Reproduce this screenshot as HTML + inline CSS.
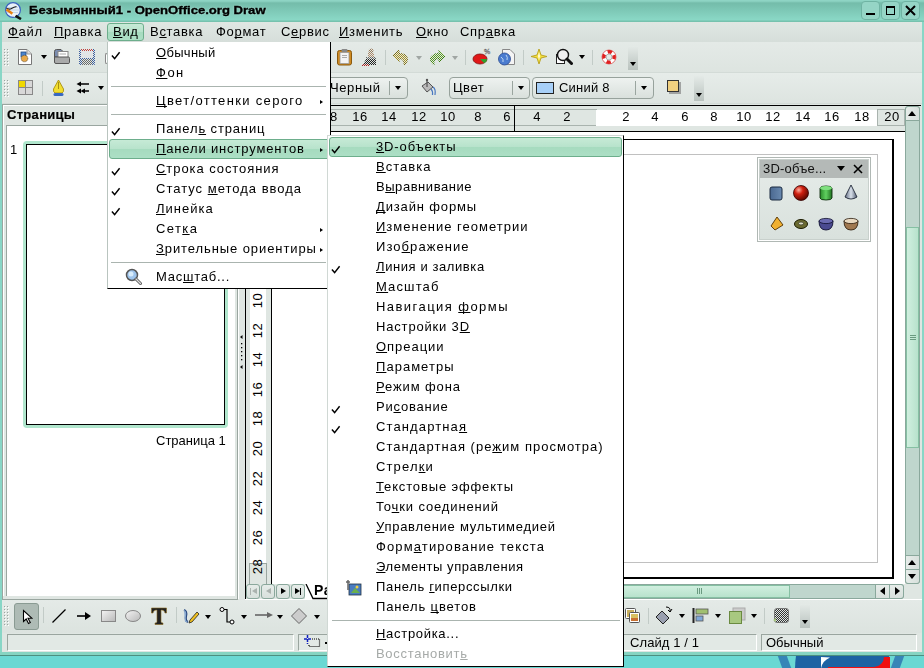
<!DOCTYPE html>
<html><head><meta charset="utf-8">
<style>
*{box-sizing:border-box}
html,body{margin:0;padding:0}
body{width:924px;height:668px;overflow:hidden;position:relative;background:#6ad8d3;font-family:"Liberation Sans",sans-serif;font-size:13px;color:#000}
.a{position:absolute}
.t{position:absolute;white-space:pre;line-height:15px;letter-spacing:0.7px;will-change:transform}
u{text-decoration:underline;text-decoration-thickness:1px;text-underline-offset:1px;text-decoration-skip-ink:none}
</style></head><body>

<!-- window frame -->
<div class="a" style="left:0;top:0;width:924px;height:655px;background:#88d6c6"></div>
<!-- title bar -->
<div class="a" style="left:0;top:0;width:924px;height:22px;background:linear-gradient(#8ed4c4 0px,#8ed4c4 1px,#74bcaa 3px,#8ad8c6 20px,#76c2ae 21px,#76c2ae 22px)"></div>
<!-- menubar -->
<div class="a" style="left:2px;top:22px;width:920px;height:20px;background:linear-gradient(#e0e7e3,#d6deda)"></div>
<!-- toolbar 1 -->
<div class="a" style="left:2px;top:42px;width:920px;height:31px;background:linear-gradient(#e4eae7,#dde4e0)"></div>
<!-- toolbar 2 -->
<div class="a" style="left:2px;top:73px;width:920px;height:31px;background:linear-gradient(#e6ece9,#dde4e0)"></div>

<!-- title icon -->
<svg class="a" style="left:4px;top:1px" width="19" height="19" viewBox="0 0 19 19">
<circle cx="9" cy="9" r="7.4" fill="#e8f0f8" stroke="#3a62c0" stroke-width="1.2"/>
<path d="M3 9H15M3 11.5H14M4 6.5H14" stroke="#c0d4ec" stroke-width="1"/>
<path d="M2.5 7 Q5 9 7.5 7.5 T12.5 5.5" stroke="#222" stroke-width="1.1" fill="none"/>
<path d="M2.5 8.5 L8.5 12.8" stroke="#e88010" stroke-width="2.6"/>
<path d="M8.5 12.8 L11.5 14.8" stroke="#f4f4f4" stroke-width="2.6"/>
<path d="M11.5 14.8 L17 18" stroke="#111" stroke-width="2.6"/>
</svg>
<div class="t" style="left:29px;top:3px;font-weight:bold;font-size:11px;letter-spacing:0;transform:scaleX(1.19);transform-origin:0 0;-webkit-text-stroke:0.35px #000;text-shadow:0 0 2px rgba(255,255,255,0.5)">Безымянный1 - OpenOffice.org Draw</div>
<!-- window buttons -->
<div class="a" style="left:861px;top:1px;width:19px;height:19px;border:1px solid #6fb3a3;border-radius:4px;background:#95d5c6"></div>
<div class="a" style="left:881px;top:1px;width:19px;height:19px;border:1px solid #6fb3a3;border-radius:4px;background:#95d5c6"></div>
<div class="a" style="left:901px;top:1px;width:19px;height:19px;border:1px solid #6fb3a3;border-radius:4px;background:#95d5c6"></div>
<div class="a" style="left:866px;top:13px;width:9px;height:2px;background:#000"></div>
<div class="a" style="left:886px;top:6px;width:9px;height:9px;border:1px solid #000;border-top-width:2px"></div>
<svg class="a" style="left:905px;top:5px" width="11" height="11" viewBox="0 0 11 11"><path d="M1 1L10 10M10 1L1 10" stroke="#000" stroke-width="2"/></svg>

<!-- menubar items -->
<div class="a" style="left:107px;top:23px;width:37px;height:18px;border:1px solid #6dae8c;border-radius:3px;background:linear-gradient(#c6ead6 0%,#b8e3cc 48%,#a6dbbf 52%,#acdfc5 100%)"></div>
<div class="t" style="left:8px;top:24px"><u>Ф</u>айл</div>
<div class="t" style="left:54px;top:24px"><u>П</u>равка</div>
<div class="t" style="left:113px;top:24px"><u>В</u>ид</div>
<div class="t" style="left:150px;top:24px">В<u>с</u>тавка</div>
<div class="t" style="left:216px;top:24px">Фо<u>р</u>мат</div>
<div class="t" style="left:281px;top:24px">С<u>е</u>рвис</div>
<div class="t" style="left:339px;top:24px"><u>И</u>зменить</div>
<div class="t" style="left:416px;top:24px"><u>О</u>кно</div>
<div class="t" style="left:460px;top:24px">Спр<u>а</u>вка</div>

<!-- main area bg -->
<div class="a" style="left:2px;top:104px;width:920px;height:496px;background:#dfe6e2"></div>

<!-- ===== left pane ===== -->
<div class="a" style="left:2px;top:104px;width:236px;height:496px;background:#dfe6e2;border-left:1px solid #9aa6a0"></div>
<div class="a" style="left:3px;top:104px;width:234px;height:1px;background:#9aa6a0"></div>
<div class="a" style="left:3px;top:105px;width:234px;height:1px;background:#fff"></div><div class="a" style="left:3px;top:105px;width:1px;height:492px;background:#fff"></div>
<div class="t" style="left:7px;top:107px;font-weight:bold;letter-spacing:0.3px;-webkit-text-stroke:0.2px #000">Страницы</div>
<div class="a" style="left:3px;top:125px;width:234px;height:474px;background:#fff"></div>
<div class="a" style="left:4px;top:125px;width:2px;height:472px;background:#e0e8e4"></div><div class="a" style="left:6px;top:125px;width:1px;height:472px;background:#9aa6a0"></div>
<div class="a" style="left:6px;top:125px;width:231px;height:1px;background:#9aa6a0"></div>
<div class="a" style="left:3px;top:596px;width:234px;height:3px;background:#dfe6e2"></div>
<div class="a" style="left:2px;top:599px;width:236px;height:1px;background:#9aa6a0"></div>
<div class="a" style="left:237px;top:104px;width:1px;height:496px;background:#9aa6a0"></div>
<div class="a" style="left:235px;top:125px;width:2px;height:472px;background:#dfe6e2"></div>
<div class="t" style="left:10px;top:142px">1</div>
<div class="a" style="left:23px;top:141px;width:205px;height:287px;border:3px solid #b0e6cd;border-radius:4px"></div>
<div class="a" style="left:26px;top:144px;width:199px;height:281px;border:1px solid #000"></div>
<div class="t" style="left:156px;top:433px;letter-spacing:0">Страница 1</div>
<!-- splitter -->
<div class="a" style="left:238px;top:104px;width:7px;height:496px;background:#dfe6e2"></div><div class="a" style="left:238px;top:104px;width:1px;height:495px;background:#fff"></div>
<svg class="a" style="left:239px;top:334px" width="5" height="36" viewBox="0 0 5 36"><path d="M1 3L3.5 1V5Z M1 33L3.5 31V35Z" fill="#000"/><rect x="2" y="9" width="1.3" height="1.3" fill="#000"/><rect x="2" y="13" width="1.3" height="1.3" fill="#000"/><rect x="2" y="17" width="1.3" height="1.3" fill="#000"/><rect x="2" y="21" width="1.3" height="1.3" fill="#000"/><rect x="2" y="25" width="1.3" height="1.3" fill="#000"/></svg>

<!-- ===== vertical ruler ===== -->
<div class="a" style="left:245px;top:105px;width:27px;height:480px;background:#dfe6e2;border-left:1px solid #000;border-right:1px solid #000"></div>
<div class="a" style="left:250px;top:132px;width:16px;height:431px;background:#fff"></div><div class="a" style="left:245px;top:584px;width:1px;height:15px;background:#000"></div>
<div class="a" style="left:249px;top:563px;width:18px;height:22px;border:1px solid #9aa6a0;border-bottom:none"></div>

<!-- ===== horizontal ruler ===== -->
<div class="a" style="left:245px;top:105px;width:661px;height:27px;background:#dfe6e2;border-top:1px solid #000;border-bottom:1px solid #000"></div><div class="a" style="left:906px;top:105px;width:15px;height:1px;background:#000"></div>
<div class="a" style="left:330px;top:109px;width:267px;height:17px;background:#dfe6e2;border:1px solid #a9b3ae;border-right:none"></div>
<div class="a" style="left:596px;top:110px;width:281px;height:16px;background:#fff"></div>
<div class="a" style="left:877px;top:109px;width:28px;height:17px;border:1px solid #a9b3ae;background:#dfe6e2"></div>
<div class="a" style="left:514px;top:105px;width:1px;height:26px;background:#000"></div>

<!-- ===== drawing area ===== -->
<div class="a" style="left:272px;top:132px;width:633px;height:452px;background:#fff"></div>
<div class="a" style="left:581px;top:139px;width:313px;height:440px;border:2px solid #000;border-width:1px 2px 2px 1px"></div>
<div class="a" style="left:596px;top:154px;width:282px;height:409px;border:1px solid #c0c0c0"></div>

<!-- vertical scrollbar -->
<div class="a" style="left:905px;top:106px;width:15px;height:478px;background:#bfd6cd;border:1px solid #8aa89c;border-radius:3px"></div>
<div class="a" style="left:905px;top:106px;width:15px;height:15px;background:linear-gradient(90deg,#e6ece9,#d8e0dc);border:1px solid #8aa89c;border-radius:3px 3px 0 0"></div>
<div class="a" style="left:906px;top:227px;width:13px;height:221px;background:linear-gradient(90deg,#d0efdf,#b8e2cc);border:1px solid #86c0a3"></div>
<div class="a" style="left:905px;top:555px;width:15px;height:15px;background:linear-gradient(90deg,#e6ece9,#d8e0dc);border:1px solid #8aa89c"></div>
<div class="a" style="left:905px;top:569px;width:15px;height:15px;background:linear-gradient(90deg,#e6ece9,#d8e0dc);border:1px solid #8aa89c;border-radius:0 0 3px 3px"></div>
<!-- horizontal scrollbar -->
<div class="a" style="left:420px;top:584px;width:484px;height:15px;background:#bfd6cd;border:1px solid #8aa89c;border-radius:3px"></div>
<div class="a" style="left:610px;top:585px;width:180px;height:13px;background:linear-gradient(#d0efdf,#b8e2cc);border:1px solid #86c0a3"></div>
<div class="a" style="left:875px;top:584px;width:15px;height:15px;background:linear-gradient(#e6ece9,#d8e0dc);border:1px solid #8aa89c"></div>
<div class="a" style="left:889px;top:584px;width:15px;height:15px;background:linear-gradient(#e6ece9,#d8e0dc);border:1px solid #8aa89c;border-radius:0 3px 3px 0"></div>
<div class="a" style="left:305px;top:584px;width:115px;height:15px;background:#fff"></div>
<!-- nav buttons + tab -->
<div class="a" style="left:246px;top:584px;width:14px;height:15px;background:linear-gradient(#e6ece9,#d8e0dc);border:1px solid #8aa89c;border-radius:3px"></div>
<div class="a" style="left:261px;top:584px;width:14px;height:15px;background:linear-gradient(#e6ece9,#d8e0dc);border:1px solid #8aa89c;border-radius:3px"></div>
<div class="a" style="left:276px;top:584px;width:14px;height:15px;background:linear-gradient(#e6ece9,#d8e0dc);border:1px solid #8aa89c;border-radius:3px"></div>
<div class="a" style="left:291px;top:584px;width:14px;height:15px;background:linear-gradient(#e6ece9,#d8e0dc);border:1px solid #8aa89c;border-radius:3px"></div>
<div class="a" style="left:245px;top:599px;width:677px;height:1px;background:#fff"></div>

<!-- bottom toolbar -->
<div class="a" style="left:2px;top:600px;width:920px;height:33px;background:linear-gradient(#e4eae7,#dce3df)"></div>
<!-- status bar -->
<div class="a" style="left:2px;top:633px;width:920px;height:21px;background:#dfe6e2"></div>

<div class="a" style="left:2px;top:72px;width:920px;height:1px;background:#d3dbd7"></div>
<div class="a" style="left:2px;top:103px;width:920px;height:1px;background:#d3dbd7"></div>
<svg class="a" style="left:4px;top:49px" width="6" height="18" viewBox="0 0 6 18"><rect x="0" y="0" width="1" height="1" fill="#9aa4a0"/><rect x="1" y="1" width="1" height="1" fill="#fff"/><rect x="3" y="0" width="1" height="1" fill="#9aa4a0"/><rect x="4" y="1" width="1" height="1" fill="#fff"/><rect x="0" y="3" width="1" height="1" fill="#9aa4a0"/><rect x="1" y="4" width="1" height="1" fill="#fff"/><rect x="3" y="3" width="1" height="1" fill="#9aa4a0"/><rect x="4" y="4" width="1" height="1" fill="#fff"/><rect x="0" y="6" width="1" height="1" fill="#9aa4a0"/><rect x="1" y="7" width="1" height="1" fill="#fff"/><rect x="3" y="6" width="1" height="1" fill="#9aa4a0"/><rect x="4" y="7" width="1" height="1" fill="#fff"/><rect x="0" y="9" width="1" height="1" fill="#9aa4a0"/><rect x="1" y="10" width="1" height="1" fill="#fff"/><rect x="3" y="9" width="1" height="1" fill="#9aa4a0"/><rect x="4" y="10" width="1" height="1" fill="#fff"/><rect x="0" y="12" width="1" height="1" fill="#9aa4a0"/><rect x="1" y="13" width="1" height="1" fill="#fff"/><rect x="3" y="12" width="1" height="1" fill="#9aa4a0"/><rect x="4" y="13" width="1" height="1" fill="#fff"/><rect x="0" y="15" width="1" height="1" fill="#9aa4a0"/><rect x="1" y="16" width="1" height="1" fill="#fff"/><rect x="3" y="15" width="1" height="1" fill="#9aa4a0"/><rect x="4" y="16" width="1" height="1" fill="#fff"/></svg>
<svg class="a" style="left:17px;top:48px;" width="16" height="18" viewBox="0 0 16 18"><path d="M1.5 1.5H10L14.5 6V16.5H1.5Z" fill="#fff" stroke="#777"/><path d="M10 1.5V6H14.5" fill="#ddd" stroke="#999"/><rect x="4" y="4" width="5" height="5" fill="#4a86d0" stroke="#234a80" stroke-width="0.8"/><circle cx="7.5" cy="10.5" r="3.3" fill="#e8a848" stroke="#333" stroke-width="0.8" stroke-dasharray="1 1"/></svg>
<div class="a" style="left:41px;top:55px;width:0;height:0;border-top:4px solid #000;border-left:3px solid transparent;border-right:3px solid transparent"></div>
<svg class="a" style="left:53px;top:48px;" width="18" height="17" viewBox="0 0 18 17"><path d="M1.5 3.5Q1.5 1.5 3.5 1.5H8L10 3.5V9H1.5Z" fill="#7a8db0" stroke="#555"/><rect x="5" y="3.5" width="10" height="7" fill="#fff" stroke="#888"/><path d="M6.5 6H13" stroke="#aaa"/><path d="M1.5 9H15.5Q16.5 9 16.5 10.5V14.5Q16.5 15.5 15 15.5H3Q1.5 15.5 1.5 14V9Z" fill="#a9aaaa" stroke="#555"/></svg>
<svg class="a" style="left:78px;top:48px;" width="18" height="18" viewBox="0 0 18 18"><defs><pattern id="dz" width="2" height="2" patternUnits="userSpaceOnUse"><rect width="1" height="1" fill="#fff"/><rect x="1" y="1" width="1" height="1" fill="#fff"/></pattern><mask id="dm"><rect width="18" height="18" fill="url(#dz)"/></mask></defs><g mask="url(#dm)"><rect x="1" y="1" width="16" height="16" rx="1" fill="#3f5f9f"/><rect x="3" y="1" width="12" height="2" fill="#c04040"/><rect x="3" y="3" width="12" height="7" fill="#e8e8e8"/><rect x="4" y="11" width="10" height="6" fill="#6a6a6a"/></g><rect x="3" y="3" width="12" height="7" fill="#dfe3e6" opacity="0.6"/></svg>
<div class="a" style="left:105px;top:53px;width:3px;height:11px;border:1px solid #888;border-right:none;border-radius:2px 0 0 2px;background:#fff"></div>
<svg class="a" style="left:336px;top:48px;" width="17" height="18" viewBox="0 0 17 18"><rect x="1.5" y="2.5" width="14" height="14.5" rx="2" fill="#d08a20" stroke="#8a5a10"/><rect x="4" y="4.5" width="9" height="11" fill="#f4f4f4" stroke="#999" stroke-width="0.8"/><rect x="5.5" y="1" width="6" height="3" rx="1" fill="#888"/><path d="M6 7.5H11M6 9.5H11" stroke="#aaa"/></svg>
<svg class="a" style="left:361px;top:48px;" width="17" height="18" viewBox="0 0 17 18"><defs><mask id="dm2"><rect width="18" height="18" fill="url(#dz)"/></mask></defs><g mask="url(#dm2)"><circle cx="10" cy="3" r="2.5" fill="#9a7a5a"/><rect x="7" y="5" width="6" height="5" fill="#b08a6a"/><rect x="5" y="9" width="10" height="3" fill="#666"/><path d="M2 17L5 11H15V17Z" fill="#222"/><path d="M1 17H8" stroke="#b02020" stroke-width="2"/></g></svg>
<div class="a" style="left:385px;top:50px;width:1px;height:15px;background:#c2cbc7"></div>
<svg class="a" style="left:392px;top:48px;" width="18" height="18" viewBox="0 0 18 18"><defs><mask id="dm3"><rect width="18" height="18" fill="url(#dz)"/></mask></defs><g mask="url(#dm3)"><path d="M1 8L7 2V5.5Q15 5.5 15.5 11Q15.5 15 12 17Q13 11 7 10.5V14Z" fill="#a89020" stroke="#7a6a10"/></g></svg>
<div class="a" style="left:416px;top:56px;width:0;height:0;border-top:4px solid #a0a6a3;border-left:3px solid transparent;border-right:3px solid transparent"></div>
<svg class="a" style="left:428px;top:48px;" width="18" height="18" viewBox="0 0 18 18"><defs><mask id="dm4"><rect width="18" height="18" fill="url(#dz)"/></mask></defs><g mask="url(#dm4)"><path d="M17 8L11 2V5.5Q3 5.5 2.5 11Q2.5 15 6 17Q5 11 11 10.5V14Z" fill="#5a9a20" stroke="#3a7a10"/></g></svg>
<div class="a" style="left:452px;top:56px;width:0;height:0;border-top:4px solid #a0a6a3;border-left:3px solid transparent;border-right:3px solid transparent"></div>
<div class="a" style="left:465px;top:50px;width:1px;height:15px;background:#c2cbc7"></div>
<svg class="a" style="left:472px;top:48px;" width="19" height="17" viewBox="0 0 19 17"><ellipse cx="8" cy="11" rx="7" ry="5" fill="#e01818" stroke="#801010" stroke-width="0.8"/><path d="M8 11L15 11Q15 14 12 15Z" fill="#30a030"/><text x="12" y="6" font-family="Liberation Sans" font-size="7" font-weight="bold" fill="#fff" stroke="#555" stroke-width="0.4">%</text></svg>
<svg class="a" style="left:497px;top:48px;" width="19" height="18" viewBox="0 0 19 18"><path d="M5.5 1.5H13L17.5 6V16.5H5.5Z" fill="#f4f4f4" stroke="#888"/><circle cx="7.5" cy="11" r="6" fill="#4a7cd0" stroke="#2a4a90" stroke-width="0.8"/><path d="M4 9Q7 11 6 14M9 7Q11 9 10 12" stroke="#c0d8f0" stroke-width="1" fill="none"/></svg>
<div class="a" style="left:523px;top:50px;width:1px;height:15px;background:#c2cbc7"></div>
<svg class="a" style="left:530px;top:48px;" width="18" height="17" viewBox="0 0 18 17"><path d="M9 1L11 7L17 8.5L11 10L9 16L7 10L1 8.5L7 7Z" fill="#f4e040" stroke="#b8a020" stroke-width="0.9"/><path d="M9 4L10 8L9 12L8 8Z" fill="#fffbe0"/></svg>
<svg class="a" style="left:555px;top:48px;" width="18" height="18" viewBox="0 0 18 18"><rect x="1.5" y="6.5" width="8" height="9" fill="#fff" stroke="#222"/><circle cx="8" cy="7" r="5.5" fill="#f0f0f0" stroke="#111" stroke-width="1.4"/><path d="M12 11L16.5 15.5" stroke="#111" stroke-width="3" stroke-linecap="round"/></svg>
<div class="a" style="left:579px;top:55px;width:0;height:0;border-top:4px solid #000;border-left:3px solid transparent;border-right:3px solid transparent"></div>
<div class="a" style="left:592px;top:50px;width:1px;height:15px;background:#c2cbc7"></div>
<svg class="a" style="left:600px;top:48px;" width="18" height="18" viewBox="0 0 18 18"><circle cx="9" cy="9" r="7" fill="#fff" stroke="#d02020" stroke-width="0.6"/><circle cx="9" cy="9" r="5.2" fill="none" stroke="#e02020" stroke-width="3.5" stroke-dasharray="4.1 4.1" transform="rotate(-22 9 9)"/><circle cx="9" cy="9" r="3" fill="#e4eae7" stroke="#888" stroke-width="0.6"/></svg>
<div class="a" style="left:628px;top:46px;width:10px;height:24px;background:linear-gradient(#e4eae7,#b9c2be)"></div>
<div class="a" style="left:630px;top:62px;width:0;height:0;border-top:4px solid #000;border-left:3px solid transparent;border-right:3px solid transparent"></div>
<svg class="a" style="left:4px;top:80px" width="6" height="18" viewBox="0 0 6 18"><rect x="0" y="0" width="1" height="1" fill="#9aa4a0"/><rect x="1" y="1" width="1" height="1" fill="#fff"/><rect x="3" y="0" width="1" height="1" fill="#9aa4a0"/><rect x="4" y="1" width="1" height="1" fill="#fff"/><rect x="0" y="3" width="1" height="1" fill="#9aa4a0"/><rect x="1" y="4" width="1" height="1" fill="#fff"/><rect x="3" y="3" width="1" height="1" fill="#9aa4a0"/><rect x="4" y="4" width="1" height="1" fill="#fff"/><rect x="0" y="6" width="1" height="1" fill="#9aa4a0"/><rect x="1" y="7" width="1" height="1" fill="#fff"/><rect x="3" y="6" width="1" height="1" fill="#9aa4a0"/><rect x="4" y="7" width="1" height="1" fill="#fff"/><rect x="0" y="9" width="1" height="1" fill="#9aa4a0"/><rect x="1" y="10" width="1" height="1" fill="#fff"/><rect x="3" y="9" width="1" height="1" fill="#9aa4a0"/><rect x="4" y="10" width="1" height="1" fill="#fff"/><rect x="0" y="12" width="1" height="1" fill="#9aa4a0"/><rect x="1" y="13" width="1" height="1" fill="#fff"/><rect x="3" y="12" width="1" height="1" fill="#9aa4a0"/><rect x="4" y="13" width="1" height="1" fill="#fff"/><rect x="0" y="15" width="1" height="1" fill="#9aa4a0"/><rect x="1" y="16" width="1" height="1" fill="#fff"/><rect x="3" y="15" width="1" height="1" fill="#9aa4a0"/><rect x="4" y="16" width="1" height="1" fill="#fff"/></svg>
<svg class="a" style="left:17px;top:79px;" width="17" height="17" viewBox="0 0 17 17"><rect x="1.5" y="1.5" width="14" height="14" fill="#d8d8d8" stroke="#888"/><rect x="2" y="2" width="6.5" height="6.5" fill="#f0d800"/><path d="M8.5 1.5V15.5M1.5 8.5H15.5" stroke="#888"/></svg>
<div class="a" style="left:42px;top:81px;width:1px;height:15px;background:#c2cbc7"></div>
<svg class="a" style="left:52px;top:79px;" width="13" height="18" viewBox="0 0 13 18"><path d="M6.5 1L11.5 10Q12 13 10 14H3Q1 13 1.5 10Z" fill="#f2de30" stroke="#a89010" stroke-width="0.9"/><path d="M6.5 3V10" stroke="#a89010"/><rect x="1.5" y="14" width="10" height="3" rx="1.5" fill="#3a68c0"/></svg>
<svg class="a" style="left:76px;top:81px;" width="14" height="13" viewBox="0 0 14 13"><path d="M3 3H13" stroke="#000" stroke-width="1.5"/><path d="M0.5 3L5 0.5V5.5Z" fill="#000"/><path d="M7 10H13" stroke="#000" stroke-width="1.5"/><path d="M0.5 10L5 7.5V12.5Z M4.5 10L9 7.5V12.5Z" fill="#000"/></svg>
<div class="a" style="left:98px;top:86px;width:0;height:0;border-top:4px solid #000;border-left:3px solid transparent;border-right:3px solid transparent"></div>
<div class="a" style="left:300px;top:77px;width:108px;height:22px;border:1px solid #97a29c;border-radius:4px;background:linear-gradient(#eef2f0,#d9e0dc)"></div>
<div class="t" style="left:330px;top:80px;letter-spacing:0.6px">Черный</div>
<div class="a" style="left:389px;top:81px;width:1px;height:14px;background:#9aa59f"></div>
<div class="a" style="left:395px;top:86px;width:0;height:0;border-top:4px solid #000;border-left:3px solid transparent;border-right:3px solid transparent"></div>
<svg class="a" style="left:419px;top:78px;" width="18" height="18" viewBox="0 0 18 18"><path d="M3 8L9 4L14 9L8 14Z" fill="#bbb" stroke="#444" stroke-width="0.9"/><path d="M8 1V9" stroke="#555" stroke-width="1.2"/><circle cx="8" cy="2" r="1.2" fill="#555"/><path d="M14 9Q17 11 16 17M12 11Q14 13 13.5 17" stroke="#4a78c0" stroke-width="1.2" fill="none"/></svg>
<div class="a" style="left:449px;top:77px;width:81px;height:22px;border:1px solid #97a29c;border-radius:4px;background:linear-gradient(#eef2f0,#d9e0dc)"></div>
<div class="t" style="left:453px;top:80px;letter-spacing:0.5px">Цвет</div>
<div class="a" style="left:512px;top:81px;width:1px;height:14px;background:#9aa59f"></div>
<div class="a" style="left:518px;top:86px;width:0;height:0;border-top:4px solid #000;border-left:3px solid transparent;border-right:3px solid transparent"></div>
<div class="a" style="left:532px;top:77px;width:122px;height:22px;border:1px solid #97a29c;border-radius:4px;background:linear-gradient(#eef2f0,#d9e0dc)"></div>
<div class="a" style="left:536px;top:82px;width:18px;height:12px;border:1px solid #222;background:#a8d0f8"></div>
<div class="t" style="left:559px;top:80px;letter-spacing:0.2px">Синий 8</div>
<div class="a" style="left:635px;top:81px;width:1px;height:14px;background:#9aa59f"></div>
<div class="a" style="left:641px;top:86px;width:0;height:0;border-top:4px solid #000;border-left:3px solid transparent;border-right:3px solid transparent"></div>
<svg class="a" style="left:666px;top:79px;" width="17" height="16" viewBox="0 0 17 16"><rect x="3" y="3" width="12" height="12" fill="#777" opacity="0.6"/><rect x="1.5" y="1.5" width="11" height="11" fill="#f0d080" stroke="#333"/></svg>
<div class="a" style="left:694px;top:76px;width:10px;height:25px;background:linear-gradient(#e4eae7,#b9c2be)"></div>
<div class="a" style="left:696px;top:93px;width:0;height:0;border-top:4px solid #000;border-left:3px solid transparent;border-right:3px solid transparent"></div>
<svg class="a" style="left:4px;top:606px" width="6" height="21" viewBox="0 0 6 21"><rect x="0" y="0" width="1" height="1" fill="#9aa4a0"/><rect x="1" y="1" width="1" height="1" fill="#fff"/><rect x="3" y="0" width="1" height="1" fill="#9aa4a0"/><rect x="4" y="1" width="1" height="1" fill="#fff"/><rect x="0" y="3" width="1" height="1" fill="#9aa4a0"/><rect x="1" y="4" width="1" height="1" fill="#fff"/><rect x="3" y="3" width="1" height="1" fill="#9aa4a0"/><rect x="4" y="4" width="1" height="1" fill="#fff"/><rect x="0" y="6" width="1" height="1" fill="#9aa4a0"/><rect x="1" y="7" width="1" height="1" fill="#fff"/><rect x="3" y="6" width="1" height="1" fill="#9aa4a0"/><rect x="4" y="7" width="1" height="1" fill="#fff"/><rect x="0" y="9" width="1" height="1" fill="#9aa4a0"/><rect x="1" y="10" width="1" height="1" fill="#fff"/><rect x="3" y="9" width="1" height="1" fill="#9aa4a0"/><rect x="4" y="10" width="1" height="1" fill="#fff"/><rect x="0" y="12" width="1" height="1" fill="#9aa4a0"/><rect x="1" y="13" width="1" height="1" fill="#fff"/><rect x="3" y="12" width="1" height="1" fill="#9aa4a0"/><rect x="4" y="13" width="1" height="1" fill="#fff"/><rect x="0" y="15" width="1" height="1" fill="#9aa4a0"/><rect x="1" y="16" width="1" height="1" fill="#fff"/><rect x="3" y="15" width="1" height="1" fill="#9aa4a0"/><rect x="4" y="16" width="1" height="1" fill="#fff"/><rect x="0" y="18" width="1" height="1" fill="#9aa4a0"/><rect x="1" y="19" width="1" height="1" fill="#fff"/><rect x="3" y="18" width="1" height="1" fill="#9aa4a0"/><rect x="4" y="19" width="1" height="1" fill="#fff"/></svg>
<div class="a" style="left:14px;top:603px;width:25px;height:27px;border:1px solid #8a9b93;border-radius:3px;background:#aebbb5"></div>
<svg class="a" style="left:22px;top:609px;" width="11" height="16" viewBox="0 0 11 16"><path d="M1.5 1.5V12.5L4.2 10L6.5 14.5L8.3 13.6L6 9.2H9.8Z" fill="#fff" stroke="#000" stroke-width="1.1"/></svg>
<div class="a" style="left:43px;top:607px;width:1px;height:16px;background:#c2cbc7"></div>
<svg class="a" style="left:51px;top:608px;" width="16" height="16" viewBox="0 0 16 16"><path d="M1.5 14.5L14.5 1.5" stroke="#000" stroke-width="1.2"/></svg>
<svg class="a" style="left:76px;top:610px;" width="16" height="12" viewBox="0 0 16 12"><path d="M1 6H11" stroke="#000" stroke-width="1.6"/><path d="M9 2L15 6L9 10Z" fill="#000"/></svg>
<svg class="a" style="left:100px;top:609px;" width="17" height="14" viewBox="0 0 17 14"><defs><linearGradient id="rg" x1="0" y1="0" x2="1" y2="1"><stop offset="0" stop-color="#f4f4f4"/><stop offset="1" stop-color="#b8b8b8"/></linearGradient></defs><rect x="1.5" y="1.5" width="14" height="11" fill="url(#rg)" stroke="#888"/></svg>
<svg class="a" style="left:124px;top:609px;" width="18" height="14" viewBox="0 0 18 14"><ellipse cx="9" cy="7" rx="7.5" ry="5.5" fill="url(#rg)" stroke="#888"/></svg>
<svg class="a" style="left:150px;top:606px;" width="18" height="20" viewBox="0 0 18 20"><path d="M1.5 2H16.5V7H15Q14.5 4 12 4H11V16Q11 17 13 17V18.5H5V17Q7 17 7 16V4H6Q3.5 4 3 7H1.5Z" fill="#222" stroke="#8a6a20" stroke-width="0.6"/></svg>
<div class="a" style="left:176px;top:607px;width:1px;height:16px;background:#c2cbc7"></div>
<svg class="a" style="left:182px;top:608px;" width="18" height="16" viewBox="0 0 18 16"><path d="M2 2Q5 3 4 8Q3 13 6 14" stroke="#2a4a80" stroke-width="2.2" fill="none"/><path d="M2 2Q5 3 4 8Q3 13 6 14L3 14Z" fill="#8aaad0"/><path d="M8 12L15 4L17 6L10 14L7 15Z" fill="#f0c020" stroke="#222" stroke-width="0.8"/></svg>
<div class="a" style="left:205px;top:615px;width:0;height:0;border-top:4px solid #000;border-left:3px solid transparent;border-right:3px solid transparent"></div>
<svg class="a" style="left:219px;top:606px;" width="16" height="20" viewBox="0 0 16 20"><circle cx="3" cy="3.5" r="2" fill="#fff" stroke="#000"/><circle cx="13" cy="16" r="2" fill="#fff" stroke="#000"/><path d="M5 3.5H8V16H11" stroke="#000" stroke-width="1.2" fill="none"/></svg>
<div class="a" style="left:241px;top:615px;width:0;height:0;border-top:4px solid #000;border-left:3px solid transparent;border-right:3px solid transparent"></div>
<svg class="a" style="left:254px;top:610px;" width="20" height="10" viewBox="0 0 20 10"><path d="M1 5H15" stroke="#666" stroke-width="1.6"/><path d="M13 2L19 5L13 8Z" fill="#666"/></svg>
<div class="a" style="left:277px;top:615px;width:0;height:0;border-top:4px solid #000;border-left:3px solid transparent;border-right:3px solid transparent"></div>
<svg class="a" style="left:290px;top:607px;" width="18" height="18" viewBox="0 0 18 18"><path d="M9 1.5L16.5 9L9 16.5L1.5 9Z" fill="#ccc" stroke="#666"/></svg>
<div class="a" style="left:314px;top:615px;width:0;height:0;border-top:4px solid #000;border-left:3px solid transparent;border-right:3px solid transparent"></div>
<svg class="a" style="left:624px;top:607px;" width="17" height="17" viewBox="0 0 17 17"><rect x="1.5" y="1.5" width="10" height="10" rx="1" fill="#fff" stroke="#555"/><rect x="3" y="3" width="7" height="7" fill="#c8b060"/><rect x="5.5" y="5.5" width="10" height="10" rx="1" fill="#fff" stroke="#555"/><rect x="7" y="7" width="7" height="7" fill="#c87030"/><rect x="7" y="7" width="7" height="4" fill="#d8c060"/></svg>
<div class="a" style="left:648px;top:608px;width:1px;height:16px;background:#c2cbc7"></div>
<svg class="a" style="left:655px;top:606px;" width="18" height="19" viewBox="0 0 18 19"><path d="M7 5L14 12L8 18L1 11Z" fill="#9aa0b0" stroke="#222" stroke-width="1"/><path d="M11 1Q16 1 15 6M13 4L15 6L17 3" stroke="#000" stroke-width="1" fill="none"/></svg>
<div class="a" style="left:679px;top:614px;width:0;height:0;border-top:4px solid #000;border-left:3px solid transparent;border-right:3px solid transparent"></div>
<svg class="a" style="left:692px;top:607px;" width="17" height="17" viewBox="0 0 17 17"><path d="M1.5 1V16" stroke="#222" stroke-width="2"/><rect x="4" y="2" width="12" height="5" fill="#a0c070" stroke="#555" stroke-width="0.8"/><rect x="4" y="9" width="7" height="5" fill="#80a8d8" stroke="#555" stroke-width="0.8"/></svg>
<div class="a" style="left:715px;top:614px;width:0;height:0;border-top:4px solid #000;border-left:3px solid transparent;border-right:3px solid transparent"></div>
<svg class="a" style="left:728px;top:607px;" width="18" height="18" viewBox="0 0 18 18"><rect x="5" y="1" width="12" height="12" fill="#ccc" stroke="#aaa"/><rect x="1.5" y="4.5" width="12" height="12" fill="#a8c880" stroke="#6a8a40"/></svg>
<div class="a" style="left:751px;top:614px;width:0;height:0;border-top:4px solid #000;border-left:3px solid transparent;border-right:3px solid transparent"></div>
<div class="a" style="left:764px;top:608px;width:1px;height:16px;background:#c2cbc7"></div>
<svg class="a" style="left:772px;top:607px;" width="18" height="18" viewBox="0 0 18 18"><defs><pattern id="dz2" width="2" height="2" patternUnits="userSpaceOnUse"><rect width="1" height="1" fill="#333"/><rect x="1" y="1" width="1" height="1" fill="#333"/></pattern></defs><path d="M5 1.5H14Q16.5 1.5 16.5 4V13Q16.5 15.5 14 15.5H5Q2.5 15.5 2.5 13V4Q2.5 1.5 5 1.5Z" fill="url(#dz2)" stroke="#666" stroke-width="0.8"/><path d="M1 13L4 11V15Z" fill="#a8c880"/></svg>
<div class="a" style="left:800px;top:604px;width:10px;height:24px;background:linear-gradient(#e4eae7,#b9c2be)"></div>
<div class="a" style="left:802px;top:620px;width:0;height:0;border-top:4px solid #000;border-left:3px solid transparent;border-right:3px solid transparent"></div>
<!-- floating 3D toolbar -->
<div class="a" style="left:757px;top:157px;width:114px;height:85px;border:1px solid #b0b8b4;background:#fff"></div>
<div class="a" style="left:759px;top:159px;width:110px;height:81px;border:1px solid #c8d0cc;background:linear-gradient(#e6ece9,#d9e1dd)"></div>
<div class="a" style="left:760px;top:160px;width:108px;height:18px;background:#b4b9b7"></div>
<div class="t" style="left:763px;top:161px;letter-spacing:0.2px;color:#111">3D-объе...</div>
<div class="a" style="left:837px;top:166px;width:0;height:0;border-top:5px solid #000;border-left:4px solid transparent;border-right:4px solid transparent"></div>
<svg class="a" style="left:853px;top:164px" width="10" height="10" viewBox="0 0 10 10"><path d="M1 1L9 9M9 1L1 9" stroke="#000" stroke-width="1.6"/></svg>
<svg class="a" style="left:767px;top:184px" width="100" height="50" viewBox="0 0 100 50">
 <defs>
  <radialGradient id="gr" cx="0.35" cy="0.3" r="0.7"><stop offset="0" stop-color="#ffb0a0"/><stop offset="0.4" stop-color="#d02010"/><stop offset="1" stop-color="#600800"/></radialGradient>
  <linearGradient id="gg" x1="0" x2="1"><stop offset="0" stop-color="#2a8a2a"/><stop offset="0.5" stop-color="#60d060"/><stop offset="1" stop-color="#207020"/></linearGradient>
  <linearGradient id="gc" x1="0" x2="1"><stop offset="0" stop-color="#606a80"/><stop offset="0.5" stop-color="#d8e0ea"/><stop offset="1" stop-color="#505a70"/></linearGradient>
  <linearGradient id="gb" x1="0" x2="1"><stop offset="0" stop-color="#4a6890"/><stop offset="1" stop-color="#6a8ab0"/></linearGradient>
 </defs>
 <rect x="3" y="3" width="12" height="13" rx="2" fill="url(#gb)" stroke="#1a2a40" stroke-width="1"/>
 <circle cx="34" cy="9" r="7.5" fill="url(#gr)" stroke="#300" stroke-width="0.8"/>
 <path d="M53 4Q53 2 59 2Q65 2 65 4V14Q65 16 59 16Q53 16 53 14Z" fill="url(#gg)" stroke="#103010" stroke-width="0.9"/>
 <ellipse cx="59" cy="4" rx="6" ry="2" fill="#80e080"/>
 <path d="M84 1L90 13Q84 17 78 13Z" fill="url(#gc)" stroke="#202838" stroke-width="0.9"/>
<g transform="translate(0,6)"> <path d="M4 36L10 27L16 35L8 40Z" fill="#f0b030" stroke="#503000" stroke-width="0.9"/></g>
<g transform="translate(0,6)"> <ellipse cx="34" cy="34" rx="6.5" ry="4.5" fill="#6a6a30" stroke="#1a1a00" stroke-width="1"/></g>
<g transform="translate(0,6)"> <ellipse cx="34" cy="33.5" rx="2.5" ry="1.4" fill="#e0e0c0" stroke="#222" stroke-width="0.6"/></g>
<g transform="translate(0,6)"> <path d="M52 31Q52 40 59 40Q66 40 66 31Z" fill="#4a4a90" stroke="#101030" stroke-width="0.9"/></g>
<g transform="translate(0,6)"> <ellipse cx="59" cy="31" rx="7" ry="2.6" fill="#6a6ab0" stroke="#101030" stroke-width="0.8"/></g>
<g transform="translate(0,6)"> <path d="M77 31Q77 40 84 40Q91 40 91 31Z" fill="#a07850" stroke="#302010" stroke-width="0.9"/></g>
<g transform="translate(0,6)"> <ellipse cx="84" cy="31" rx="7" ry="2.6" fill="#e8d8c0" stroke="#302010" stroke-width="0.8"/></g>
</svg>
<!-- nav arrows -->
<div class="a" style="left:250px;top:588px;width:1px;height:7px;background:#aab2ae"></div>
<div class="a" style="left:252px;top:588px;width:0;height:0;border-right:5px solid #aab2ae;border-top:3.5px solid transparent;border-bottom:3.5px solid transparent"></div>
<div class="a" style="left:266px;top:588px;width:0;height:0;border-right:5px solid #aab2ae;border-top:3.5px solid transparent;border-bottom:3.5px solid transparent"></div>
<div class="a" style="left:281px;top:588px;width:0;height:0;border-left:5px solid #000;border-top:3.5px solid transparent;border-bottom:3.5px solid transparent"></div>
<div class="a" style="left:295px;top:588px;width:0;height:0;border-left:5px solid #000;border-top:3.5px solid transparent;border-bottom:3.5px solid transparent"></div>
<div class="a" style="left:300px;top:588px;width:1px;height:7px;background:#000"></div>
<svg class="a" style="left:305px;top:584px" width="30" height="16" viewBox="0 0 30 16"><path d="M1 0L8 14.5H30" stroke="#000" stroke-width="1.3" fill="none"/></svg>
<div class="t" style="left:314px;top:583px;font-weight:bold;font-size:14px;letter-spacing:0.5px">Pa</div>
<!-- scrollbar arrows -->
<div class="a" style="left:908px;top:111px;width:0;height:0;border-bottom:5px solid #000;border-left:4.5px solid transparent;border-right:4.5px solid transparent"></div>
<div class="a" style="left:908px;top:560px;width:0;height:0;border-bottom:5px solid #000;border-left:4.5px solid transparent;border-right:4.5px solid transparent"></div>
<div class="a" style="left:908px;top:574px;width:0;height:0;border-top:5px solid #000;border-left:4.5px solid transparent;border-right:4.5px solid transparent"></div>
<div class="a" style="left:880px;top:587px;width:0;height:0;border-right:5px solid #000;border-top:4.5px solid transparent;border-bottom:4.5px solid transparent"></div>
<div class="a" style="left:895px;top:587px;width:0;height:0;border-left:5px solid #000;border-top:4.5px solid transparent;border-bottom:4.5px solid transparent"></div>
<div class="a" style="left:697px;top:588px;width:5px;height:6px;border-left:1px solid #6a9a80;border-right:1px solid #6a9a80"></div>
<div class="a" style="left:699px;top:588px;width:1px;height:6px;background:#6a9a80"></div>
<div class="a" style="left:910px;top:335px;width:6px;height:5px;border-top:1px solid #6a9a80;border-bottom:1px solid #6a9a80"></div>
<div class="a" style="left:910px;top:337px;width:6px;height:1px;background:#6a9a80"></div>

<div class="t" style="left:551.5px;top:109px;width:30px;text-align:center;letter-spacing:0.4px">2</div>
<div class="t" style="left:521.9px;top:109px;width:30px;text-align:center;letter-spacing:0.4px">4</div>
<div class="t" style="left:492.4px;top:109px;width:30px;text-align:center;letter-spacing:0.4px">6</div>
<div class="t" style="left:462.8px;top:109px;width:30px;text-align:center;letter-spacing:0.4px">8</div>
<div class="t" style="left:433.2px;top:109px;width:30px;text-align:center;letter-spacing:0.4px">10</div>
<div class="t" style="left:403.7px;top:109px;width:30px;text-align:center;letter-spacing:0.4px">12</div>
<div class="t" style="left:374.1px;top:109px;width:30px;text-align:center;letter-spacing:0.4px">14</div>
<div class="t" style="left:344.6px;top:109px;width:30px;text-align:center;letter-spacing:0.4px">16</div>
<div class="t" style="left:315.1px;top:109px;width:30px;text-align:center;letter-spacing:0.4px">18</div>
<div class="t" style="left:610.5px;top:109px;width:30px;text-align:center;letter-spacing:0.4px">2</div>
<div class="t" style="left:640.1px;top:109px;width:30px;text-align:center;letter-spacing:0.4px">4</div>
<div class="t" style="left:669.6px;top:109px;width:30px;text-align:center;letter-spacing:0.4px">6</div>
<div class="t" style="left:699.2px;top:109px;width:30px;text-align:center;letter-spacing:0.4px">8</div>
<div class="t" style="left:728.8px;top:109px;width:30px;text-align:center;letter-spacing:0.4px">10</div>
<div class="t" style="left:758.3px;top:109px;width:30px;text-align:center;letter-spacing:0.4px">12</div>
<div class="t" style="left:787.9px;top:109px;width:30px;text-align:center;letter-spacing:0.4px">14</div>
<div class="t" style="left:817.4px;top:109px;width:30px;text-align:center;letter-spacing:0.4px">16</div>
<div class="t" style="left:847.0px;top:109px;width:30px;text-align:center;letter-spacing:0.4px">18</div>
<div class="t" style="left:876.5px;top:109px;width:30px;text-align:center;letter-spacing:0.4px">20</div>
<div class="t" style="left:242px;top:175.1px;width:30px;text-align:center;letter-spacing:0.4px;will-change:auto;transform:rotate(-90deg)">2</div>
<div class="t" style="left:242px;top:204.6px;width:30px;text-align:center;letter-spacing:0.4px;will-change:auto;transform:rotate(-90deg)">4</div>
<div class="t" style="left:242px;top:234.2px;width:30px;text-align:center;letter-spacing:0.4px;will-change:auto;transform:rotate(-90deg)">6</div>
<div class="t" style="left:242px;top:263.7px;width:30px;text-align:center;letter-spacing:0.4px;will-change:auto;transform:rotate(-90deg)">8</div>
<div class="t" style="left:242px;top:293.2px;width:30px;text-align:center;letter-spacing:0.4px;will-change:auto;transform:rotate(-90deg)">10</div>
<div class="t" style="left:242px;top:322.8px;width:30px;text-align:center;letter-spacing:0.4px;will-change:auto;transform:rotate(-90deg)">12</div>
<div class="t" style="left:242px;top:352.4px;width:30px;text-align:center;letter-spacing:0.4px;will-change:auto;transform:rotate(-90deg)">14</div>
<div class="t" style="left:242px;top:381.9px;width:30px;text-align:center;letter-spacing:0.4px;will-change:auto;transform:rotate(-90deg)">16</div>
<div class="t" style="left:242px;top:411.4px;width:30px;text-align:center;letter-spacing:0.4px;will-change:auto;transform:rotate(-90deg)">18</div>
<div class="t" style="left:242px;top:441.0px;width:30px;text-align:center;letter-spacing:0.4px;will-change:auto;transform:rotate(-90deg)">20</div>
<div class="t" style="left:242px;top:470.6px;width:30px;text-align:center;letter-spacing:0.4px;will-change:auto;transform:rotate(-90deg)">22</div>
<div class="t" style="left:242px;top:500.1px;width:30px;text-align:center;letter-spacing:0.4px;will-change:auto;transform:rotate(-90deg)">24</div>
<div class="t" style="left:242px;top:529.7px;width:30px;text-align:center;letter-spacing:0.4px;will-change:auto;transform:rotate(-90deg)">26</div>
<div class="t" style="left:242px;top:559.2px;width:30px;text-align:center;letter-spacing:0.4px;will-change:auto;transform:rotate(-90deg)">28</div>
<!-- status bar cells -->
<div class="a" style="left:7px;top:634px;width:287px;height:17px;border:1px solid;border-color:#9aa59f #fff #fff #9aa59f;background:#e2e9e5"></div>
<div class="a" style="left:298px;top:634px;width:326px;height:17px;border:1px solid;border-color:#9aa59f #fff #fff #9aa59f;background:#e2e9e5"></div>
<svg class="a" style="left:304px;top:635px" width="17" height="13" viewBox="0 0 17 13"><path d="M3.5 0V9M0 4H7" stroke="#1020c0" stroke-width="1.5" stroke-dasharray="3 1"/><path d="M8 4H15.5V11.5H5V9" stroke="#000" stroke-width="1.2" stroke-dasharray="1 1" fill="none"/></svg>
<div class="a" style="left:325px;top:642px;width:2px;height:2px;background:#000"></div>
<div class="a" style="left:600px;top:634px;width:157px;height:17px;border:1px solid;border-color:#9aa59f #fff #fff #9aa59f;background:#e2e9e5"></div>
<div class="t" style="left:630px;top:635px;letter-spacing:0.1px">Слайд 1 / 1</div>
<div class="a" style="left:761px;top:634px;width:156px;height:17px;border:1px solid;border-color:#9aa59f #fff #fff #9aa59f;background:#e2e9e5"></div>
<div class="t" style="left:766px;top:635px;letter-spacing:0">Обычный</div>
<!-- window bottom edge -->
<div class="a" style="left:0;top:652px;width:924px;height:3px;background:#86d4c2"></div>
<div class="a" style="left:0;top:655px;width:924px;height:1px;background:#4d8f80"></div>
<!-- desktop logo -->
<div class="a" style="left:0;top:656px;width:924px;height:12px;overflow:hidden">
 <div class="a" style="left:780px;top:-1px;width:9px;height:14px;background:#2a70b0;transform:skewX(20deg);opacity:0.8"></div>
 <div class="a" style="left:893px;top:-1px;width:9px;height:14px;background:#2a70b0;transform:skewX(-20deg);opacity:0.8"></div>
 <div class="a" style="left:795px;top:-60px;width:95px;height:150px;border-radius:50%;background:#1d63a3"></div>
 <div class="a" style="left:828px;top:1px;width:62px;height:12px;background:#f01010;border-radius:0 0 0 0"></div>
 <div class="a" style="left:822px;top:-10px;width:62px;height:21px;background:#1d63a3;border-radius:0 0 10px 4px"></div>
 <svg class="a" style="left:815px;top:0" width="20" height="13" viewBox="0 0 20 13"><path d="M6 13Q7 5 15 1.5L6 1Z" fill="#fff"/></svg>
</div>

<!-- MENUS -->
<div class="a" style="left:107px;top:42px;width:224px;height:247px;background:#fff;border-left:1px solid #b9c4bf;border-right:1px solid #000;border-bottom:1px solid #000"></div>
<div class="a" style="left:111px;top:86px;width:215px;height:1px;background:#aab4af"></div>
<div class="a" style="left:111px;top:114px;width:215px;height:1px;background:#aab4af"></div>
<div class="a" style="left:111px;top:262px;width:215px;height:1px;background:#aab4af"></div>
<div class="a" style="left:109px;top:139px;width:222px;height:20px;border:1px solid #6dae8c;border-radius:3px;background:linear-gradient(#c6ead6 0%,#b8e3cc 48%,#a6dbbf 52%,#acdfc5 100%)"></div>
<div class="t" style="left:156px;top:45px;letter-spacing:0.300px"><u>О</u>бычный</div>
<svg class="a" style="left:111px;top:51px" width="10" height="9" viewBox="0 0 10 9"><path d="M0.9 4.6 L3.6 7.6 L8.6 1.2" stroke="#000" stroke-width="1.45" fill="none"/></svg>
<div class="t" style="left:156px;top:65px;letter-spacing:1.500px"><u>Ф</u>он</div>
<div class="t" style="left:156px;top:93px;letter-spacing:1.333px"><u>Ц</u>вет/оттенки серого</div>
<div class="a" style="left:320px;top:100px;width:0;height:0;border-left:3.5px solid #000;border-top:2.5px solid transparent;border-bottom:2.5px solid transparent"></div>
<div class="t" style="left:156px;top:121px;letter-spacing:0.854px">Панел<u>ь</u> страниц</div>
<svg class="a" style="left:111px;top:127px" width="10" height="9" viewBox="0 0 10 9"><path d="M0.9 4.6 L3.6 7.6 L8.6 1.2" stroke="#000" stroke-width="1.45" fill="none"/></svg>
<div class="t" style="left:156px;top:141px;letter-spacing:0.850px"><u>П</u>анели инструментов</div>
<div class="a" style="left:320px;top:148px;width:0;height:0;border-left:3.5px solid #000;border-top:2.5px solid transparent;border-bottom:2.5px solid transparent"></div>
<div class="t" style="left:156px;top:161px;letter-spacing:0.933px"><u>С</u>трока состояния</div>
<svg class="a" style="left:111px;top:167px" width="10" height="9" viewBox="0 0 10 9"><path d="M0.9 4.6 L3.6 7.6 L8.6 1.2" stroke="#000" stroke-width="1.45" fill="none"/></svg>
<div class="t" style="left:156px;top:181px;letter-spacing:1.000px">Статус <u>м</u>етода ввода</div>
<svg class="a" style="left:111px;top:187px" width="10" height="9" viewBox="0 0 10 9"><path d="M0.9 4.6 L3.6 7.6 L8.6 1.2" stroke="#000" stroke-width="1.45" fill="none"/></svg>
<div class="t" style="left:156px;top:201px;letter-spacing:1.000px"><u>Л</u>инейка</div>
<svg class="a" style="left:111px;top:207px" width="10" height="9" viewBox="0 0 10 9"><path d="M0.9 4.6 L3.6 7.6 L8.6 1.2" stroke="#000" stroke-width="1.45" fill="none"/></svg>
<div class="t" style="left:156px;top:221px;letter-spacing:1.375px">Сет<u>к</u>а</div>
<div class="a" style="left:320px;top:228px;width:0;height:0;border-left:3.5px solid #000;border-top:2.5px solid transparent;border-bottom:2.5px solid transparent"></div>
<div class="t" style="left:156px;top:241px;letter-spacing:0.911px"><u>З</u>рительные ориентиры</div>
<div class="a" style="left:320px;top:248px;width:0;height:0;border-left:3.5px solid #000;border-top:2.5px solid transparent;border-bottom:2.5px solid transparent"></div>
<div class="t" style="left:156px;top:269px;letter-spacing:0.756px">Мас<u>ш</u>таб...</div>
<svg class="a" style="left:125px;top:268px" width="18" height="18" viewBox="0 0 18 18"><circle cx="7" cy="7" r="5.5" fill="#9ec4ec" stroke="#555" stroke-width="1.5"/><circle cx="6" cy="6" r="2.5" fill="#d8ecfb"/><path d="M11 11 L15.5 15.5" stroke="#555" stroke-width="3" stroke-linecap="round"/><path d="M11 11 L15.5 15.5" stroke="#ddd" stroke-width="1.2" stroke-linecap="round"/></svg>
<div class="a" style="left:327px;top:135px;width:297px;height:532px;background:#fff;border-left:1px solid #d0d8d4;border-top:1px solid #d0d8d4;border-right:1px solid #000;border-bottom:1px solid #000"></div>
<div class="a" style="left:329px;top:137px;width:293px;height:20px;border:1px solid #6dae8c;border-radius:3px;background:linear-gradient(#c6ead6 0%,#b8e3cc 48%,#a6dbbf 52%,#acdfc5 100%)"></div>
<div class="t" style="left:376px;top:139px;letter-spacing:0.867px"><u>3</u>D-объекты</div>
<svg class="a" style="left:331px;top:145px" width="10" height="9" viewBox="0 0 10 9"><path d="M0.9 4.6 L3.6 7.6 L8.6 1.2" stroke="#000" stroke-width="1.45" fill="none"/></svg>
<div class="t" style="left:376px;top:159px;letter-spacing:1.033px"><u>В</u>ставка</div>
<div class="t" style="left:376px;top:179px;letter-spacing:0.545px">В<u>ы</u>равнивание</div>
<div class="t" style="left:376px;top:199px;letter-spacing:0.855px"><u>Д</u>изайн формы</div>
<div class="t" style="left:376px;top:219px;letter-spacing:0.994px"><u>И</u>зменение геометрии</div>
<div class="t" style="left:376px;top:239px;letter-spacing:1.060px">Изо<u>б</u>ражение</div>
<div class="t" style="left:376px;top:259px;letter-spacing:0.586px"><u>Л</u>иния и заливка</div>
<svg class="a" style="left:331px;top:265px" width="10" height="9" viewBox="0 0 10 9"><path d="M0.9 4.6 L3.6 7.6 L8.6 1.2" stroke="#000" stroke-width="1.45" fill="none"/></svg>
<div class="t" style="left:376px;top:279px;letter-spacing:1.133px"><u>М</u>асштаб</div>
<div class="t" style="left:376px;top:299px;letter-spacing:1.443px">Навигация <u>ф</u>ормы</div>
<div class="t" style="left:376px;top:319px;letter-spacing:0.827px">Настройки 3<u>D</u></div>
<div class="t" style="left:376px;top:339px;letter-spacing:0.971px"><u>О</u>преации</div>
<div class="t" style="left:376px;top:359px;letter-spacing:1.025px"><u>П</u>араметры</div>
<div class="t" style="left:376px;top:379px;letter-spacing:0.889px"><u>Р</u>ежим фона</div>
<div class="t" style="left:376px;top:399px;letter-spacing:0.775px">Ри<u>с</u>ование</div>
<svg class="a" style="left:331px;top:405px" width="10" height="9" viewBox="0 0 10 9"><path d="M0.9 4.6 L3.6 7.6 L8.6 1.2" stroke="#000" stroke-width="1.45" fill="none"/></svg>
<div class="t" style="left:376px;top:419px;letter-spacing:1.120px">Стандартна<u>я</u></div>
<svg class="a" style="left:331px;top:425px" width="10" height="9" viewBox="0 0 10 9"><path d="M0.9 4.6 L3.6 7.6 L8.6 1.2" stroke="#000" stroke-width="1.45" fill="none"/></svg>
<div class="t" style="left:376px;top:439px;letter-spacing:1.018px">Стандартная (ре<u>ж</u>им просмотра)</div>
<div class="t" style="left:376px;top:459px;letter-spacing:1.133px">Стрел<u>к</u>и</div>
<div class="t" style="left:376px;top:479px;letter-spacing:0.856px"><u>Т</u>екстовые эффекты</div>
<div class="t" style="left:376px;top:499px;letter-spacing:0.867px">То<u>ч</u>ки соединений</div>
<div class="t" style="left:376px;top:519px;letter-spacing:0.727px"><u>У</u>правление мультимедией</div>
<div class="t" style="left:376px;top:539px;letter-spacing:1.115px">Форм<u>а</u>тирование текста</div>
<div class="t" style="left:376px;top:559px;letter-spacing:0.567px"><u>Э</u>лементы управления</div>
<div class="t" style="left:376px;top:579px;letter-spacing:0.659px">Панель <u>г</u>иперссылки</div>
<div class="t" style="left:376px;top:599px;letter-spacing:0.867px">Панель <u>ц</u>ветов</div>
<div class="a" style="left:332px;top:620px;width:288px;height:1px;background:#aab4af"></div>
<div class="t" style="left:376px;top:626px"><u>Н</u>астройка...</div>
<div class="t" style="left:376px;top:646px;color:#a6aaa8">Восстановит<u style="text-decoration-color:#a6aaa8">ь</u></div>
<svg class="a" style="left:345px;top:579px" width="17" height="17" viewBox="0 0 17 17"><rect x="4" y="5" width="12" height="11" fill="#4a7cc0" stroke="#234" stroke-width="0.8"/><path d="M6 14 L10 9 L15 14Z" fill="#6ab04c"/><circle cx="12" cy="8" r="1.5" fill="#f0d040"/><path d="M3 1 L3 11 M1 3 L5 3" stroke="#666" stroke-width="1.5"/></svg>
</body></html>
